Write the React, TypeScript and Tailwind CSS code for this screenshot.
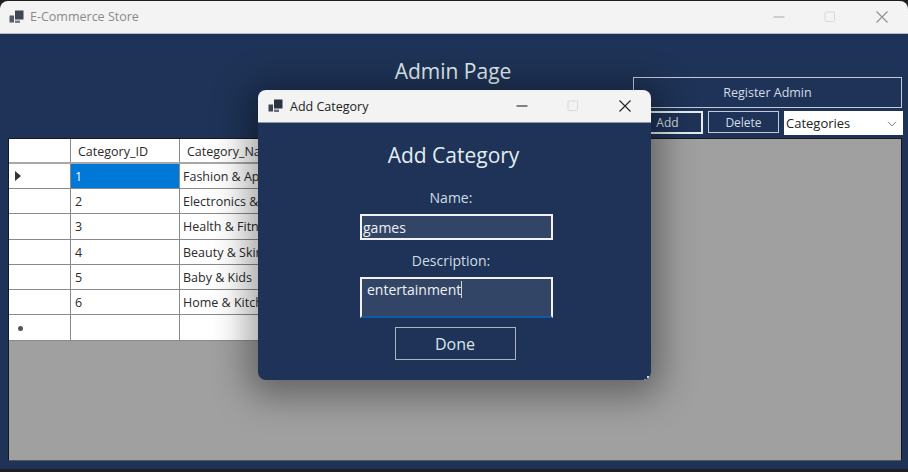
const font = { fontFamily: '"Open Sans", "Noto Sans", sans-serif' };

const rows = [
  { id: "1", name: "Fashion & Apparel", h: "h-[25px]", current: true },
  { id: "2", name: "Electronics & Gadgets", h: "h-[25px]" },
  { id: "3", name: "Health & Fitness", h: "h-[26px]" },
  { id: "4", name: "Beauty & Skincare", h: "h-[25px]" },
  { id: "5", name: "Baby & Kids", h: "h-[25px]" },
  { id: "6", name: "Home & Kitchen", h: "h-[25px]" },
];

const AppIcon = ({ muted }: { muted?: boolean }) => (
  <svg width="15" height="14" viewBox="0 0 15 14" className="shrink-0">
    <rect x="6" y="0.500" width="8.500" height="9" fill={muted ? "#3f4652" : "#2b3340"} />
    <rect x="0.500" y="5.500" width="4.500" height="7" fill={muted ? "#555c68" : "#3d4552"} />
    <rect x="6" y="10.500" width="5" height="2.500" fill={muted ? "#777d87" : "#6a717d"} />
  </svg>
);

const WindowButtons = ({ dark }: { dark?: boolean }) => (
  <div className="flex items-center">
    <svg width="12" height="12" viewBox="0 0 12 12">
      <path d="M0.500 6h11" stroke={dark ? "#111" : "#a8a8a8"} strokeWidth="1" />
    </svg>
    <svg width="12" height="12" viewBox="0 0 12 12" className="ml-[39px]">
      <rect x="1" y="1" width="9.500" height="9.500" rx="1" fill="none" stroke="#d8d8d8" />
    </svg>
    <svg width="14" height="14" viewBox="0 0 14 14" className="ml-[39px]">
      <path d="M1.500 1.500l11 11M12.500 1.500l-11 11" stroke={dark ? "#222" : "#8f8f8f"} strokeWidth="1.100" />
    </svg>
  </div>
);

const GridRow = ({
  h,
  head,
  id,
  name,
  current,
  header,
}: {
  h: string;
  head?: React.ReactNode;
  id?: string;
  name?: string;
  current?: boolean;
  header?: boolean;
}) => (
  <div
    className={`flex w-[411px] ${h} bg-white text-[12.500px] text-[#2a2a2a] ${header ? "border-b-2 border-[#a8a8a8]" : "border-b border-[#8a8a8a]"}`}
  >
    <div className="flex w-[62px] shrink-0 items-center border-r border-[#8a8a8a] pl-[6px]">{head}</div>
    <div
      className={`flex w-[109px] shrink-0 items-center border-r border-[#8a8a8a] ${header ? "pl-[7px] pt-[4px]" : "pl-[4px] pt-[2px]"} ${current ? "bg-[#0078d7] text-white" : ""}`}
    >
      {id}
    </div>
    <div className={`flex w-[240px] shrink-0 items-center whitespace-nowrap ${header ? "pl-[7px] pt-[4px]" : "pl-[3px] pt-[2px]"}`}>{name}</div>
  </div>
);

const Dialog = () => (
  <div className="absolute left-[258px] top-[89px] flex h-[290px] w-[393px] flex-col overflow-hidden rounded-lg bg-[#1e3357] shadow-[0_6px_36px_10px_rgba(0,0,0,0.38)]">
    <div className="flex h-[33px] shrink-0 items-center justify-between border-b border-[#8d96a3] bg-[#f3f3f3] pl-[10px] pr-[19px]">
      <div className="flex items-center gap-[7px] text-[12.500px] text-[#222]">
        <AppIcon />
        <span className="pt-[2px]">Add Category</span>
      </div>
      <WindowButtons dark />
    </div>
    <div className="flex flex-1 flex-col items-center text-[#e3edf0]">
      <h2 className="mt-[17px] h-[30px] pr-[2px] text-[21px] leading-[30px]">Add Category</h2>
      <div className="mt-[17px] h-[22px] pr-[7px] text-[14px] leading-[22px] text-[#cfdde3]">Name:</div>
      <div className="ml-[4px] mt-[5px] flex h-[26px] w-[193px] items-center border-2 border-[#f2f2f2] bg-[#334566] pl-[1px] text-[14px] text-[#eef2f4]">
        games
      </div>
      <div className="mt-[10px] h-[22px] pr-[7px] text-[14px] leading-[22px] text-[#cfdde3]">Description:</div>
      <div className="ml-[4px] mt-[5px] flex h-[41px] w-[193px] items-start border-2 border-[#f2f2f2] border-b-[#0f5ca5] bg-[#334566] pl-[5px] pt-[1px] text-[14px] leading-[20px] text-[#eef2f4]">
        <span>entertainment</span>
        <span className="mt-[1px] h-[17px] w-[1px] bg-[#cfd4da]" />
      </div>
      <button className="ml-[1px] mt-[9px] h-[33px] w-[121px] border border-[#a9b4c0] text-[16px] text-[#dbe6ea]">Done</button>
    </div>
    <div className="absolute bottom-[2px] right-[2px] h-[2px] w-[2px] bg-[#d8dce0]" />
    <div className="absolute bottom-[0px] right-[5px] h-[1px] w-[2px] bg-[#aab2bd]" />
  </div>
);

export default function App() {
  return (
    <div className="h-[472px] w-[908px] overflow-hidden bg-[#1f1f1f] pt-[1px]" style={font}>
      <div className="relative flex h-[468px] flex-col overflow-hidden rounded-t-lg bg-[#1e3357]">
        <div className="flex h-[33px] shrink-0 items-center justify-between border-b border-[#b7bcc3] bg-[#f3f3f3] pl-[9px] pr-[19px]">
          <div className="flex items-center gap-[6px] text-[12.500px] text-[#8a8a8a]">
            <AppIcon muted />
            <span>E-Commerce Store</span>
          </div>
          <WindowButtons />
        </div>

        <div className="flex h-[104px] shrink-0">
          <h1 className="ml-[271px] mt-[22px] h-[30px] w-[362px] pl-[2px] text-center text-[21px] leading-[30px] text-[#e3edf0]">
            Admin Page
          </h1>
          <div className="mt-[43px] flex w-[271px] flex-col">
            <button className="h-[31px] w-[269px] border border-[#c3ccd6] pt-[1px] text-[12.500px] text-[#d3dde3]">
              Register Admin
            </button>
            <div className="mt-[3px] flex items-start">
              <button className="h-[23px] w-[70px] border-2 border-[#e8ecef] pr-[1px] pt-[1px] text-[12px] text-[#d3dde3]">Add</button>
              <button className="ml-[5px] h-[22px] w-[71px] border border-[#c3ccd6] pt-[2px] text-[12px] text-[#d3dde3]">Delete</button>
              <div className="ml-[5px] flex h-[24px] w-[119px] items-center justify-between bg-white pl-[2px] pr-[6px] pt-[1px] text-[13px] text-[#222]">
                <span>Categories</span>
                <svg width="10" height="6" viewBox="0 0 10 6">
                  <path d="M1 0.800l4 4 4-4" fill="none" stroke="#777" strokeWidth="1" />
                </svg>
              </div>
            </div>
          </div>
        </div>

        <div className="mx-[8px] h-[323px] w-[894px] border border-[#15181d] border-b-[#50555c] bg-[#a0a0a0]">
          <GridRow h="h-[25px]" id="Category_ID" name="Category_Name" header />
          {rows.map((row, i) => (
            <GridRow
              key={row.id}
              h={row.h}
              id={row.id}
              name={row.name}
              current={row.current}
              head={
                i === 0 ? (
                  <svg width="6" height="10" viewBox="0 0 6 10">
                    <path d="M0 0l6 5-6 5z" fill="#333" />
                  </svg>
                ) : null
              }
            />
          ))}
          <GridRow
            h="h-[26px]"
            head={<span className="ml-[3px] mt-[2px] h-[5px] w-[5px] rounded-full bg-[#555]" />}
          />
        </div>

        <Dialog />
      </div>
    </div>
  );
}
